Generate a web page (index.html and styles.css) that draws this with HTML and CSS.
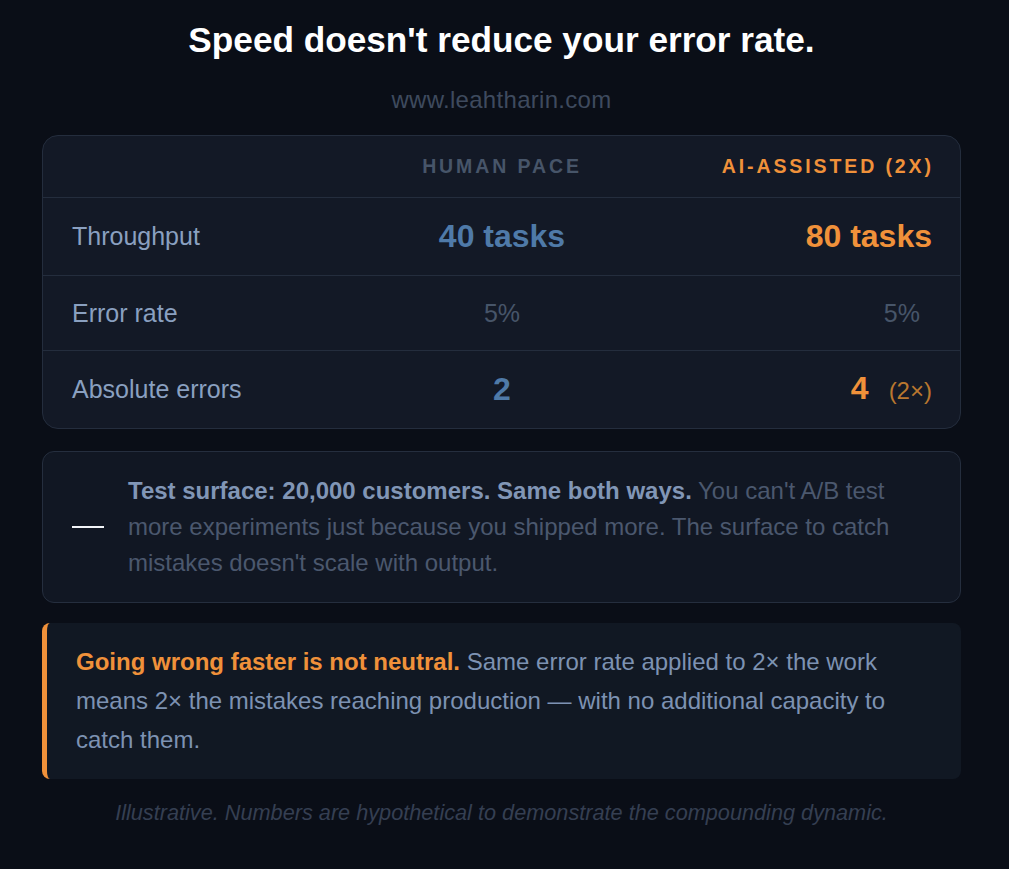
FILE: index.html
```html
<!DOCTYPE html>
<html lang="en">
<head>
<meta charset="utf-8">
<title>Speed doesn't reduce your error rate.</title>
<link rel="stylesheet" href="styles.css">
</head>
<body>
<main class="page">
  <h1 class="title">Speed doesn't reduce your error rate.</h1>
  <p class="site">www.leahtharin.com</p>

  <section class="table">
    <div class="row head">
      <div class="cell label"></div>
      <div class="cell mid">HUMAN PACE</div>
      <div class="cell end ai">AI-ASSISTED (2X)</div>
    </div>
    <div class="row r1">
      <div class="cell label">Throughput</div>
      <div class="cell mid big blue">40 tasks</div>
      <div class="cell end big orange">80 tasks</div>
    </div>
    <div class="row r2">
      <div class="cell label">Error rate</div>
      <div class="cell mid pct">5%</div>
      <div class="cell end pct"><span class="pct-r">5%</span></div>
    </div>
    <div class="row r3">
      <div class="cell label">Absolute errors</div>
      <div class="cell mid big blue">2</div>
      <div class="cell end combo"><span class="big orange">4</span><span class="mult">(2×)</span></div>
    </div>
  </section>

  <section class="note">
    <span class="dash"></span>
    <p class="note-text"><strong>Test surface: 20,000 customers. Same both ways.</strong> You can't A/B test more experiments just because you shipped more. The surface to catch mistakes doesn't scale with output.</p>
  </section>

  <section class="callout">
    <p><strong>Going wrong faster is not neutral.</strong> Same error rate applied to 2× the work means 2× the mistakes reaching production — with no additional capacity to catch them.</p>
  </section>

  <p class="foot">Illustrative. Numbers are hypothetical to demonstrate the compounding dynamic.</p>
</main>
</body>
</html>
```

FILE: styles.css
```css
* { box-sizing: border-box; }
html, body { margin: 0; padding: 0; }
body {
  background: #0a0e17;
  font-family: "Liberation Sans", Arial, sans-serif;
  color: #8aa0c0;
}
.page {
  width: 919px;
  margin-left: 42px;
  padding-top: 19px;
}
.title {
  margin: 0;
  text-align: center;
  color: #ffffff;
  font-size: 35.2px;
  line-height: 42px;
  font-weight: 700;
}
.site {
  margin: 24px 0 0;
  text-align: center;
  color: #3e4a5e;
  font-size: 24px;
  line-height: 30px;
  letter-spacing: 0.3px;
}
.table {
  margin-top: 20px;
  background: #131926;
  border: 1px solid #242d3d;
  border-radius: 16px;
  overflow: hidden;
}
.row {
  display: grid;
  grid-template-columns: 1fr 1fr 1fr;
  align-items: center;
  padding: 20px 28px 20px 29px;
  border-bottom: 1px solid #242d3d;
}
.row:last-child { border-bottom: 0; }
.head { padding: 20px 29px 20px 30px; line-height: 21px; }
.r1 { line-height: 37px; }
.r2 { line-height: 34px; }
.r3 { line-height: 35px; }
.cell.mid { text-align: center; }
.cell.end { text-align: right; }
.cell.combo {
  display: flex;
  justify-content: flex-end;
  align-items: baseline;
}
.head .cell {
  font-size: 19.5px;
  font-weight: 700;
  letter-spacing: 2.9px;
  color: #475569;
}
.head .cell.end { margin-right: -2.9px; }
.head .ai { color: #f0913a; }
.label {
  font-size: 25px;
  color: #8aa0c0;
}
.big {
  font-size: 32px;
  font-weight: 700;
}
.blue { color: #4f7aa8; }
.orange { color: #f0913a; }
.pct {
  font-size: 25px;
  color: #475569;
}
.pct-r { margin-right: 12px; }
.mult {
  margin-left: 20px;
  font-size: 24px;
  color: #b9772f;
}
.note {
  margin-top: 22px;
  display: flex;
  align-items: center;
  gap: 24px;
  padding: 21px 30px 21px 29px;
  background: #111723;
  border: 1px solid #252e3e;
  border-radius: 12px;
}
.dash {
  flex: 0 0 32px;
  height: 2px;
  background: #f2f4f8;
}
.note-text {
  margin: 0;
  font-size: 24px;
  line-height: 36px;
  color: #4b586e;
}
.note-text strong { color: #8196b6; }
.callout {
  margin-top: 20px;
  background: #111823;
  border-left: 5px solid #f0913a;
  border-radius: 8px;
  padding: 19px 30px 20px 29px;
}
.callout p {
  margin: 0;
  font-size: 24px;
  line-height: 39px;
  color: #7d92b2;
}
.callout strong { color: #f0913a; }
.foot {
  margin: 19px 0 0;
  text-align: center;
  font-style: italic;
  font-size: 21.7px;
  line-height: 30px;
  color: #353f52;
}
```
